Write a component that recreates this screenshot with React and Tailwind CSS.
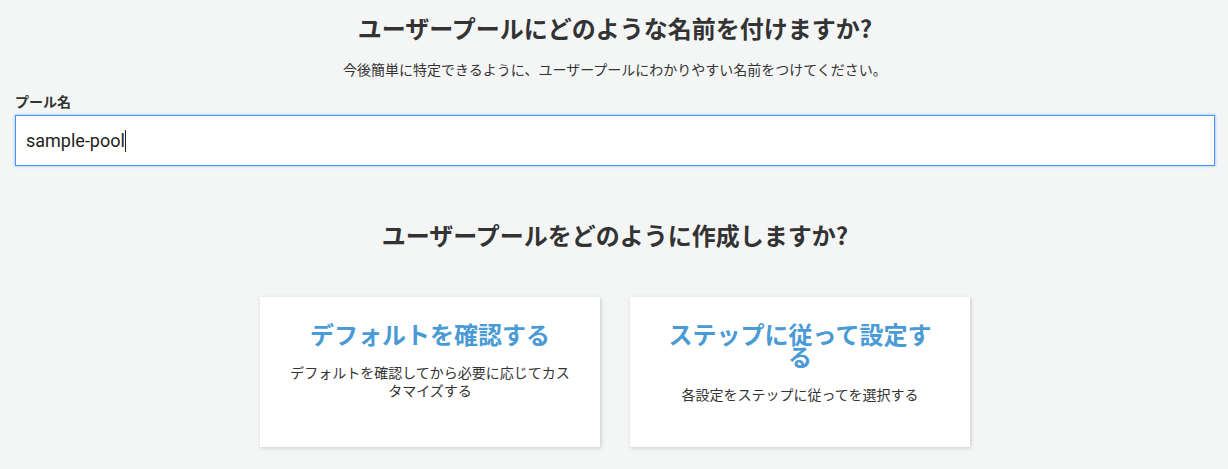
const jp = { fontFamily: '"Noto Sans CJK JP", "Noto Sans", sans-serif' };

const OptionCard = ({ title, description }) => (
  <div className="w-[340px] h-[150px] bg-white shadow-[1px_1px_4px_rgba(0,0,0,0.18)] px-7 pt-[26px] text-center">
    <h3 className="text-[24px] leading-[22px] font-bold text-[#4a9ad6]">{title}</h3>
    <p className="mt-[18px] text-[14px] leading-[18px] text-[#333]">{description}</p>
  </div>
);

export default function App() {
  return (
    <div className="min-h-[469px] bg-[#f4f6f6] text-[#333] pl-[15px] pr-[13px]" style={jp}>
      <h1 className="pt-3 text-center text-[24px] leading-[32px] font-bold text-[#333]">
        ユーザープールにどのような名前を付けますか?
      </h1>
      <p className="mt-[16px] text-center text-[14px] leading-[18px] text-[#333]">
        今後簡単に特定できるように、ユーザープールにわかりやすい名前をつけてください。
      </p>
      <label className="block mt-[14px] text-[14px] leading-[18px] font-bold text-[#333]">プール名</label>
      <div className="mt-[5px] h-[51px] bg-white border border-[#4b93f1] shadow-[0_0_3px_rgba(77,148,240,0.6)] flex items-center px-[10px]">
        <span className="text-[18px] text-[#222]" style={{ fontFamily: 'Roboto, "Liberation Sans", sans-serif' }}>
          sample-pool
        </span>
        <span className="w-px h-[22px] bg-[#222]" />
      </div>
      <h2 className="mt-[53px] text-center text-[24px] leading-[32px] font-bold text-[#333]">
        ユーザープールをどのように作成しますか?
      </h2>
      <div className="mt-[46px] flex justify-center gap-[30px]">
        <OptionCard title="デフォルトを確認する" description="デフォルトを確認してから必要に応じてカスタマイズする" />
        <OptionCard title="ステップに従って設定する" description="各設定をステップに従ってを選択する" />
      </div>
    </div>
  );
}
